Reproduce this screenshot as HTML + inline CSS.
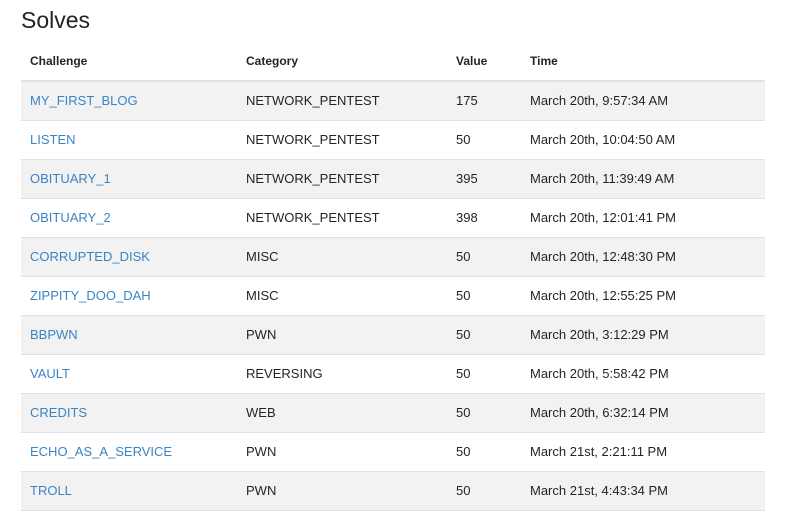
<!DOCTYPE html>
<html><head><style>
body{margin:0;background:#fff;font-family:"Liberation Sans",sans-serif;color:#212529;width:786px;height:524px;overflow:hidden}
h1{position:absolute;left:21px;top:7px;margin:0;font-weight:normal;font-size:23px;color:#222}
table{position:absolute;left:21px;top:41px;width:744px;border-collapse:collapse;font-size:13px}
th{text-align:left;font-size:12px;font-weight:bold;height:39px;border-bottom:2px solid #dee2e6;padding:0 0 0 9px;vertical-align:middle}
td{height:36px;border-bottom:1px solid #dee2e6;padding:0 0 2px 9px;vertical-align:middle;box-sizing:content-box}
tbody tr:nth-child(odd){background:#f2f2f2}
a{color:#3a84c4;text-decoration:none}
</style></head><body>
<h1>Solves</h1>
<table>
<colgroup><col style="width:216px"><col style="width:210px"><col style="width:74px"><col></colgroup>
<thead><tr><th>Challenge</th><th>Category</th><th>Value</th><th>Time</th></tr></thead>
<tbody>
<tr><td><a>MY_FIRST_BLOG</a></td><td>NETWORK_PENTEST</td><td>175</td><td>March 20th, 9:57:34 AM</td></tr>
<tr><td><a>LISTEN</a></td><td>NETWORK_PENTEST</td><td>50</td><td>March 20th, 10:04:50 AM</td></tr>
<tr><td><a>OBITUARY_1</a></td><td>NETWORK_PENTEST</td><td>395</td><td>March 20th, 11:39:49 AM</td></tr>
<tr><td><a>OBITUARY_2</a></td><td>NETWORK_PENTEST</td><td>398</td><td>March 20th, 12:01:41 PM</td></tr>
<tr><td><a>CORRUPTED_DISK</a></td><td>MISC</td><td>50</td><td>March 20th, 12:48:30 PM</td></tr>
<tr><td><a>ZIPPITY_DOO_DAH</a></td><td>MISC</td><td>50</td><td>March 20th, 12:55:25 PM</td></tr>
<tr><td><a>BBPWN</a></td><td>PWN</td><td>50</td><td>March 20th, 3:12:29 PM</td></tr>
<tr><td><a>VAULT</a></td><td>REVERSING</td><td>50</td><td>March 20th, 5:58:42 PM</td></tr>
<tr><td><a>CREDITS</a></td><td>WEB</td><td>50</td><td>March 20th, 6:32:14 PM</td></tr>
<tr><td><a>ECHO_AS_A_SERVICE</a></td><td>PWN</td><td>50</td><td>March 21st, 2:21:11 PM</td></tr>
<tr><td><a>TROLL</a></td><td>PWN</td><td>50</td><td>March 21st, 4:43:34 PM</td></tr>
</tbody></table>
</body></html>
